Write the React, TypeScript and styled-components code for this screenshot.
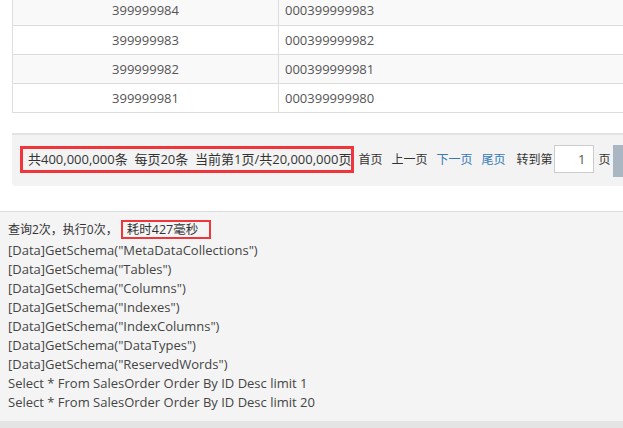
import styled, { createGlobalStyle } from "styled-components";

const GlobalStyle = createGlobalStyle`
  html, body {
    margin: 0;
    padding: 0;
    background: #fff;
    overflow: hidden;
  }
  body {
    font-family: "Open Sans", "Noto Sans CJK SC", sans-serif;
    font-size: 13px;
    color: #333;
  }
`;

const rows = [
  ["399999984", "000399999983"],
  ["399999983", "000399999982"],
  ["399999982", "000399999981"],
  ["399999981", "000399999980"],
];

const logLines = [
  '[Data]GetSchema("MetaDataCollections")',
  '[Data]GetSchema("Tables")',
  '[Data]GetSchema("Columns")',
  '[Data]GetSchema("Indexes")',
  '[Data]GetSchema("IndexColumns")',
  '[Data]GetSchema("DataTypes")',
  '[Data]GetSchema("ReservedWords")',
  "Select * From SalesOrder Order By ID Desc limit 1",
  "Select * From SalesOrder Order By ID Desc limit 20",
];

const App = () => {
  return (
    <Page>
      <GlobalStyle />
      <Content>
        <DataTable>
          <tbody>
            {rows.map((r, i) => (
              <Row key={i} $striped={i % 2 === 0}>
                <IdCell>{r[0]}</IdCell>
                <CodeCell>{r[1]}</CodeCell>
              </Row>
            ))}
          </tbody>
        </DataTable>

        <Pager>
          <Summary>
            共400,000,000条&nbsp;&nbsp;每页20条&nbsp;&nbsp;当前第1页/共20,000,000页
          </Summary>
          <PageLink>首页</PageLink>
          <PageLink>上一页</PageLink>
          <PageLink $active>下一页</PageLink>
          <PageLink $active>尾页</PageLink>
          <JumpLabel>转到第</JumpLabel>
          <PageInput defaultValue="1" />
          <JumpLabel>页</JumpLabel>
          <GoButton />
        </Pager>
      </Content>

      <Log>
        <LogLine $first>
          <Cjk>查询2次，执行0次，</Cjk>
          <Timing>耗时427毫秒</Timing>
        </LogLine>
        {logLines.map((l, i) => (
          <LogLine key={i}>{l}</LogLine>
        ))}
      </Log>
      <BottomBar />
    </Page>
  );
};

export default App;

const Page = styled.div`
  width: 623px;
  height: 428px;
  overflow: hidden;
  display: flex;
  flex-direction: column;
`;

const Content = styled.div`
  padding-left: 12px;
  margin-top: -4px;
`;

const DataTable = styled.table`
  width: 660px;
  border-collapse: collapse;
  border-left: 1px solid #ddd;
`;

const Row = styled.tr<{ $striped?: boolean }>`
  height: 29px;
  background: ${(p) => (p.$striped ? "#f9f9f9" : "#fff")};
  border-bottom: 1px solid #ddd;
`;

const IdCell = styled.td`
  width: 249px;
  padding: 0 8px;
  text-align: center;
  color: #555;
  border-right: 1px solid #ddd;
`;

const CodeCell = styled.td`
  padding: 0 6px;
  color: #555;
`;

const Pager = styled.div`
  margin-top: 20px;
  width: 660px;
  height: 53px;
  box-sizing: border-box;
  background: #f3f3f3;
  border-top: 2px solid #e3e3e3;
  border-bottom-left-radius: 4px;
  padding-left: 8px;
  display: flex;
  align-items: center;
  white-space: nowrap;
`;

const Summary = styled.span`
  border: 3px solid #f0363b;
  padding: 1px 0 1px 5px;
  line-height: 19px;
  margin-right: 4px;
  margin-top: -2px;
`;

const PageLink = styled.span<{ $active?: boolean }>`
  font-size: 12px;
  margin-right: 9px;
  margin-top: -2px;
  color: ${(p) => (p.$active ? "#3479b7" : "#333")};
`;

const JumpLabel = styled.span`
  font-size: 12px;
  margin-left: 2px;
  margin-top: -2px;
`;

const PageInput = styled.input`
  width: 40px;
  height: 28px;
  box-sizing: border-box;
  margin: -2px 2px 0;
  border: 1px solid #ccc;
  background: #fff;
  text-align: right;
  padding: 0 8px;
  font: inherit;
  color: #555;
  outline: none;
`;

const GoButton = styled.div`
  width: 40px;
  height: 32px;
  margin-left: 2px;
  margin-top: 2px;
  background: #aab6c1;
`;

const Log = styled.div`
  margin-top: 25px;
  flex: 1;
  background: #f4f4f4;
  border-top: 1px solid #dcdcdc;
  padding: 8px 8px 0;
`;

const LogLine = styled.div<{ $first?: boolean }>`
  line-height: 19px;
  height: ${(p) => (p.$first ? "21px" : "19px")};
  color: #444;
  white-space: nowrap;
`;

const Cjk = styled.span`
  font-size: 12px;
  color: #333;
`;

const Timing = styled.span`
  display: inline-block;
  font-size: 12.5px;
  color: #333;
  border: 2px solid #f0363b;
  padding: 0 11px 0 4px;
  line-height: 15px;
  margin-left: 3px;
`;

const BottomBar = styled.div`
  height: 7px;
  background: #e4e4e4;
`;
